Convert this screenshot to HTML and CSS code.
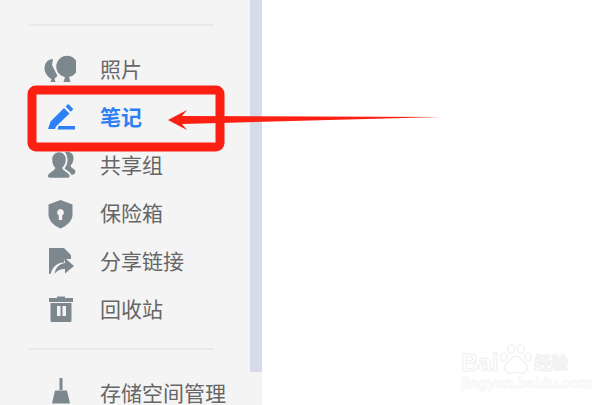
FILE: index.html
```html
<!DOCTYPE html>
<html>
  <head>
    <meta charset="utf-8" />
    <link rel="stylesheet" href="styles.css">
  </head>
  <body>
    <div class="app">
      <div class="sidebar">
        <div class="menu">
          <div class="line line-top"></div>
          <div class="item">
            <svg class="icon" viewBox="0 0 32 32"><path d="M9 6C4 6 .5 10 .5 15.500c0 4.500 3.500 8.500 7 10.500l-1 3h5l-1-3.500 3-2.500L8 12z"/><circle class="cut" cx="23" cy="13.500" r="11.500"/><path d="M21 24h4l1.500 5h-7z"/></svg>
            <span>照片</span>
          </div>
          <div class="item active">
            <svg class="icon" viewBox="0 0 32 32"><path d="M4 28l2.500-7.500L20 7l5.500 5.500L12 25.500 11 28z"/><path d="M21.500 5.500l2.800-2.500 5 5-2.500 2.800zM14.500 25H31v3.500H13.500z"/></svg>
            <span>笔记</span>
          </div>
          <div class="item">
            <svg class="icon" viewBox="0 0 32 32"><path d="M21 3c5-1 8.500 1.500 8.500 6 0 3-1 5.500-3 7.500.3 2.500 3.500 2.800 5 5.500l-1 3-3 1c-1-3-5-4.500-7-6.500 2-2.500 3-5.500 3-8.500 0-3-1-5.500-2.500-8z"/><path class="cut" d="M15 2.500c4.500 0 7.500 3.300 7.500 8 0 4-2 7-3.500 8.500 1 3 7 3.500 7.500 8 0 1.500-1 2.500-3 2.500H6c-2 0-3-1-3-2.500.5-4.500 6.500-5 7.500-8C9 17.500 7.500 14.500 7.500 10.500c0-4.700 3-8 7.500-8z"/></svg>
            <span>共享组</span>
          </div>
          <div class="item">
            <svg class="icon" viewBox="0 0 32 32"><path fill-rule="evenodd" d="M16.500 3l12 4.500v10c0 6-5 11-12 14-7-3-12-8-12-14v-10zm0 9a3.500 3.500 0 0 0-1.700 6.500V23h3.400v-4.500a3.500 3.500 0 0 0-1.700-6.500z"/></svg>
            <span>保险箱</span>
          </div>
          <div class="item">
            <svg class="icon" viewBox="0 0 32 32"><path d="M5 3h15l7 7v4h-6l-1 3.500c-7 0-11 4-13.500 11.500H5z"/><path d="M21 13l9 8-9 7.500V24c-5 0-8 1.500-10.500 5 1-6.500 4.500-10 10.500-11z"/></svg>
            <span>分享链接</span>
          </div>
          <div class="item">
            <svg class="icon" viewBox="0 0 32 32"><path fill-rule="evenodd" d="M5 5h8V3.500h8V5h8v4H5zM6.500 10h21v17.500A1.500 1.500 0 0 1 26 29H8a1.500 1.500 0 0 1-1.500-1.500zM13 13v10h3.500V13zm5.500 0v10H22V13z"/></svg>
            <span>回收站</span>
          </div>
          <div class="line line-bottom"></div>
          <div class="item">
            <svg class="icon" viewBox="0 0 32 32"><path d="M15.500 1h3v12h-3zM11 13.500h12l3 13H8z"/></svg>
            <span>存储空间管理</span>
          </div>
        </div>
        <div class="track"><div class="thumb"></div></div>
      </div>
      <div class="main"></div>
    </div>

    <svg class="marks" viewBox="0 0 601 405">
      <rect class="box" x="32" y="90" width="188" height="57" rx="4" />
      <polygon class="arrow" points="168,120 187,110 182,116 441,117 182,124 187,130" />
    </svg>

    <div class="watermark">
      <div class="wm-top">
        <span>Bai</span>
        <svg class="paw" viewBox="0 0 36 32"><g><ellipse cx="6" cy="14" rx="3" ry="4"/><ellipse cx="13" cy="6" rx="3.500" ry="4.500"/><ellipse cx="23" cy="6" rx="3.500" ry="4.500"/><ellipse cx="30" cy="14" rx="3" ry="4"/><path d="M18 13c5 0 6 5 10 8 3 3 1 9-4 9-2 0-4-1-6-1s-4 1-6 1c-5 0-7-6-4-9 4-3 5-8 10-8z"/></g></svg>
        <span class="wm-cn">经验</span>
      </div>
      <div class="wm-url">jingyan.baidu.com</div>
    </div>
  </body>
</html>
```

FILE: styles.css
```css
html,
body {
  margin: 0;
  padding: 0;
  height: 100%;
  overflow: hidden;
  background: #ffffff;
}
body {
  font-family: "Liberation Sans", "Noto Sans CJK SC", sans-serif;
}
.app {
  display: flex;
  height: 405px;
}
.sidebar {
  display: flex;
  width: 262px;
  background: #f4f4f4;
}
.menu {
  width: 250px;
  padding-top: 24px;
  box-sizing: border-box;
}
.track {
  width: 12px;
}
.thumb {
  height: 372px;
  background: #d7dbe8;
}
.main {
  flex: 1;
}
.line {
  height: 2px;
  margin: 0 36px 0 28px;
  background: #e9e9e9;
}
.line-top {
  margin-bottom: 19px;
}
.line-bottom {
  margin-top: 15px;
  margin-bottom: 19px;
}
.item {
  display: flex;
  align-items: center;
  gap: 24px;
  height: 48px;
  padding-left: 44px;
  font-size: 21px;
  color: #666666;
}
.item span {
  padding-bottom: 3px;
}
.icon {
  width: 32px;
  height: 32px;
  flex: none;
  fill: #7d878e;
}
.cut {
  stroke: #f4f4f4;
  stroke-width: 1.500;
}
.active {
  color: #2d7ff5;
  font-weight: bold;
}
.active .icon {
  fill: #2d7ff5;
}
.marks {
  position: absolute;
  left: 0;
  top: 0;
  width: 601px;
  height: 405px;
}
.box {
  fill: none;
  stroke: #fc2012;
  stroke-width: 9;
}
.arrow {
  fill: #fc2012;
}
.watermark {
  position: absolute;
  left: 461px;
  top: 339px;
  color: #ffffff;
  -webkit-text-stroke: 1px #efefef;
}
.wm-top {
  display: flex;
  align-items: flex-end;
  height: 36px;
  font-size: 24px;
  font-weight: bold;
  line-height: 24px;
}
.paw {
  width: 36px;
  height: 32px;
  fill: none;
  stroke: #efefef;
  stroke-width: 1.200;
}
.wm-cn {
  font-size: 17px;
  line-height: 22px;
}
.wm-url {
  font-size: 15px;
  font-weight: bold;
  line-height: 16px;
  -webkit-text-stroke: 0.600px #f2f2f2;
}
```
